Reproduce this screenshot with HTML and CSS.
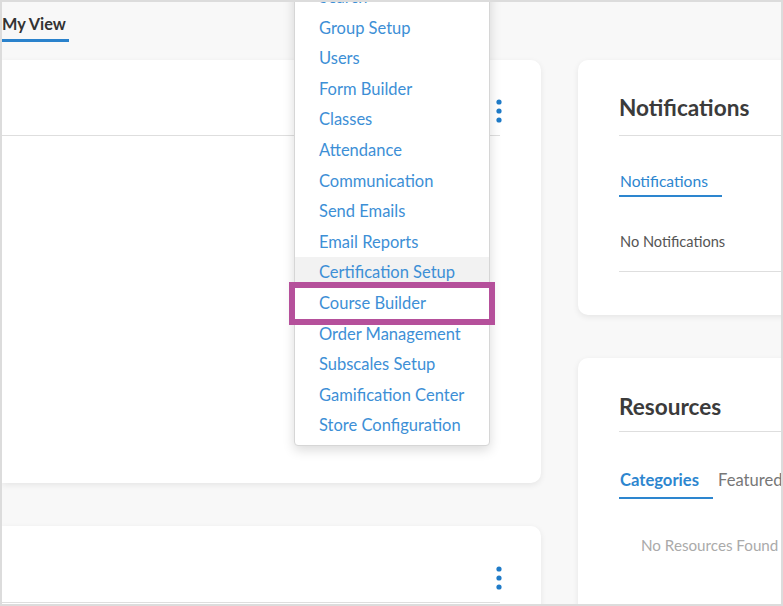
FILE: index.html
```html
<!DOCTYPE html>
<html lang="en">
<head>
  <meta charset="UTF-8" />
  <meta name="viewport" content="width=device-width, initial-scale=1.0"/>
  <title>My View</title>
  <link rel="stylesheet" href="styles.css">
</head>
<body>

<div class="frame">
  <header class="tabs">
    <a class="tab active" href="#">My View</a>
  </header>

  <main class="dashboard">
    <section class="col-main">
      <div class="card widget widget-tall">
        <div class="widget-head">
          <button class="kebab" aria-label="More">
            <svg width="6" height="24" viewBox="0 0 6 24"><circle cx="3" cy="3" r="2.6"/><circle cx="3" cy="12" r="2.6"/><circle cx="3" cy="21" r="2.6"/></svg>
          </button>
        </div>
      </div>
      <div class="card widget">
        <div class="widget-head">
          <button class="kebab" aria-label="More">
            <svg width="6" height="24" viewBox="0 0 6 24"><circle cx="3" cy="3" r="2.6"/><circle cx="3" cy="12" r="2.6"/><circle cx="3" cy="21" r="2.6"/></svg>
          </button>
        </div>
      </div>
    </section>

    <aside class="col-side">
      <div class="card panel notifications">
        <h2 class="panel-title">Notifications</h2>
        <div class="panel-tabs">
          <span class="panel-tab active">Notifications</span>
        </div>
        <p class="empty">No Notifications</p>
      </div>

      <div class="card panel resources">
        <h2 class="panel-title">Resources</h2>
        <div class="panel-tabs">
          <span class="panel-tab active">Categories</span>
          <span class="panel-tab">Featured</span>
        </div>
        <p class="empty muted">No Resources Found</p>
      </div>
    </aside>
  </main>

  <!-- admin dropdown, opened from the top nav -->
  <nav class="admin-menu">
    <a href="#">Search</a>
    <a href="#">Group Setup</a>
    <a href="#">Users</a>
    <a href="#">Form Builder</a>
    <a href="#">Classes</a>
    <a href="#">Attendance</a>
    <a href="#">Communication</a>
    <a href="#">Send Emails</a>
    <a href="#">Email Reports</a>
    <a href="#" class="hover">Certification Setup</a>
    <a href="#" class="marked">Course Builder</a>
    <a href="#">Order Management</a>
    <a href="#">Subscales Setup</a>
    <a href="#">Gamification Center</a>
    <a href="#">Store Configuration</a>
  </nav>
</div>

</body>
</html>
```

FILE: styles.css
```css
* { box-sizing: border-box; }
html, body {
  margin: 0; padding: 0;
}
body {
  font-family: Lato, "Open Sans", Arial, sans-serif;
  color: #333;
  background: #f8f8f8;
}
.frame {
  position: relative;
  width: 783px;
  height: 606px;
  overflow: hidden;
  border: 2px solid #dcdcdc;
  background: #f8f8f8;
}

/* top tabs */
.tabs {
  height: 58px;
  padding-top: 12px;
}
.tab {
  display: inline-block;
  font-size: 16.3px;
  font-weight: 700;
  line-height: 20px;
  color: #333;
  text-decoration: none;
  padding: 0 3px 5px 0;
  border-bottom: 3px solid #2a82cc;
}

/* layout */
.dashboard {
  display: flex;
  gap: 37px;
}
.col-main {
  flex: 0 0 539px;
  display: flex;
  flex-direction: column;
  gap: 43px;
}
.col-side {
  flex: 0 0 260px;
  display: flex;
  flex-direction: column;
  gap: 43px;
}
.card {
  background: #fff;
  border-radius: 10px;
  box-shadow: 0 2px 6px rgba(0,0,0,0.08);
}

/* widgets on the left, cut off by the scroll */
.widget {
  border-radius: 0 10px 10px 0;
  padding-right: 41px;
  height: 120px;
}
.widget-tall {
  height: 423px;
}
.widget-head {
  display: flex;
  justify-content: flex-end;
  padding: 39px 0 12px;
  border-bottom: 1px solid #dedede;
}
.widget + .widget .widget-head {
  padding-top: 40px;
}
.kebab {
  border: none;
  background: none;
  padding: 0;
  margin-right: -2px;
  line-height: 0;
  cursor: pointer;
}
.kebab svg { fill: #1f7bc8; display: block; }

/* right side panels */
.panel {
  border-radius: 10px 0 0 10px;
  padding-left: 41px;
}
.panel-title {
  margin: 0;
  font-size: 22.6px;
  font-weight: 700;
  line-height: 28px;
  color: #3b3b3b;
  border-bottom: 1px solid #dedede;
}
.panel-tabs {
  display: flex;
  gap: 5px;
}
.panel-tab {
  display: inline-block;
  line-height: 20px;
  padding-right: 14px;
  color: #777;
}
.panel-tab.active {
  color: #2d86cf;
  border-bottom: 2px solid #2d86cf;
}
.empty {
  margin: 0;
  font-size: 14.6px;
  line-height: 18px;
  color: #555;
}

.notifications {
  height: 255px;
  padding-top: 34px;
}
.notifications .panel-title { padding-bottom: 13px; }
.notifications .panel-tabs { margin-top: 35px; }
.notifications .panel-tab { font-size: 15.6px; padding-bottom: 4px; padding-left: 1px; }
.notifications .empty {
  margin-top: 36px;
  padding: 0 0 20px 1px;
  border-bottom: 1px solid #dedede;
}

.resources {
  height: 300px;
  padding-top: 35px;
}
.resources .panel-title { padding-bottom: 10px; }
.resources .panel-tabs { margin-top: 38px; }
.resources .panel-tab { font-size: 16.6px; padding-bottom: 7px; }
.resources .panel-tab.active { font-weight: 700; padding-left: 1px; }
.empty.muted {
  margin-top: 37px;
  padding-left: 22px;
  font-size: 15.2px;
  color: #aaa;
}

/* dropdown */
.admin-menu {
  position: absolute;
  left: 292px;
  top: -21px;
  width: 196px;
  padding-bottom: 4px;
  background: #fff;
  border: 1px solid #d6d6d6;
  border-radius: 4px;
  box-shadow: 0 4px 12px rgba(0,0,0,0.15);
}
.admin-menu a {
  display: block;
  height: 30.6px;
  line-height: 30.6px;
  padding-left: 24px;
  font-size: 16.5px;
  color: #3d8fd6;
  text-decoration: none;
  white-space: nowrap;
}
.admin-menu a.hover {
  background: #f2f2f2;
}
.admin-menu a.marked {
  position: relative;
  outline: 6px solid #b5509b;
  outline-offset: 0;
  z-index: 1;
}
```
